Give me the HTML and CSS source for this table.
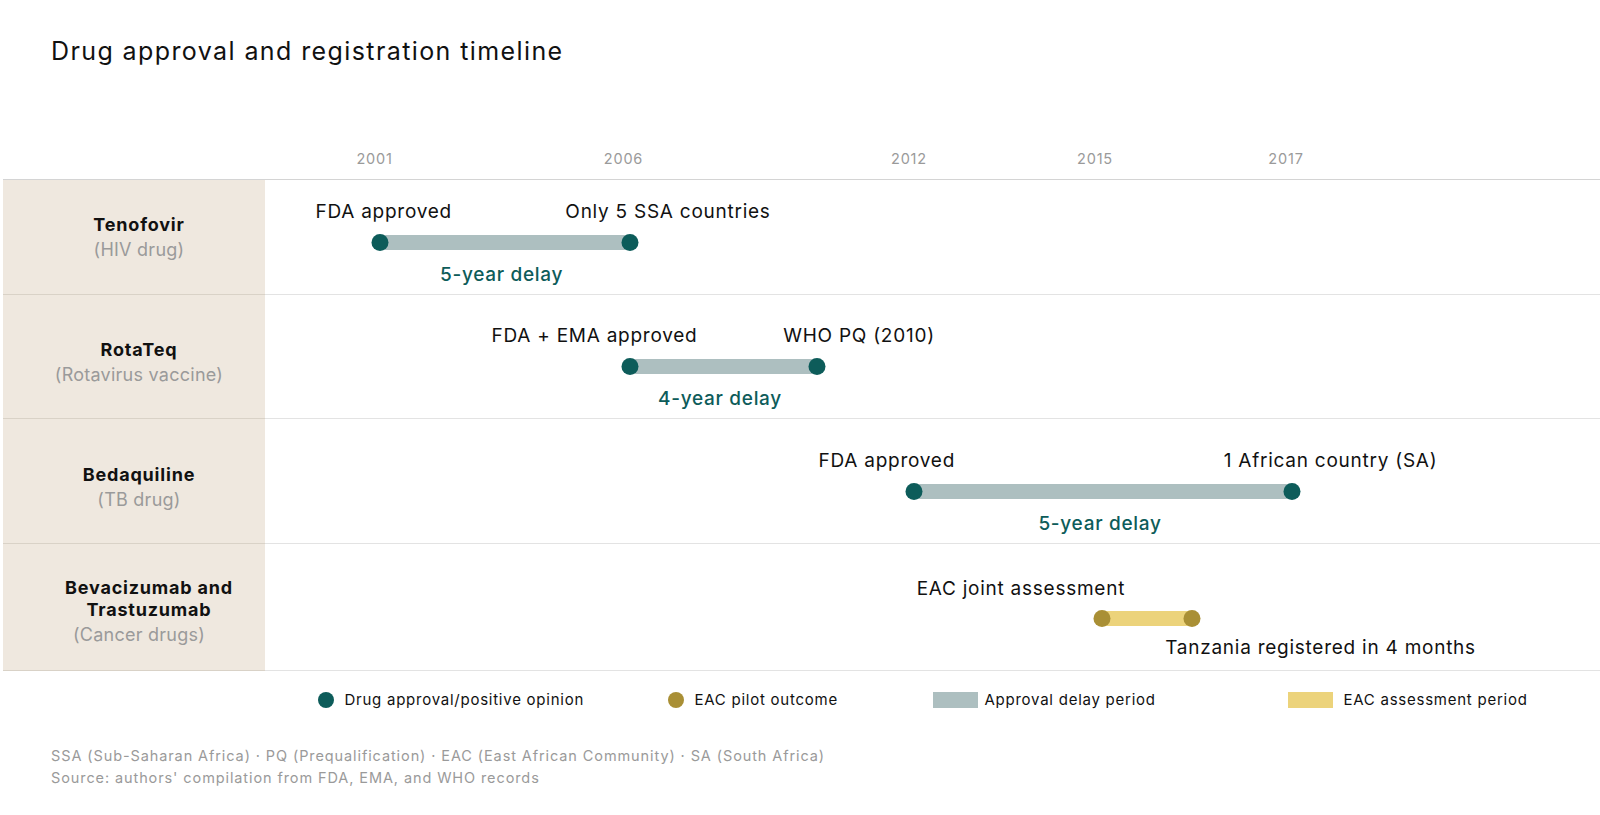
FILE: index.html
```html
<!DOCTYPE html>
<html lang="en">
<head>
<meta charset="utf-8">
<title>Drug approval and registration timeline</title>
<link rel="stylesheet" href="styles.css">
</head>
<body>
<div class="chart">
  <h1 class="title">Drug approval and registration timeline</h1>

  <div class="axis">
    <div class="axis-spacer"></div>
    <div class="axis-years">
      <span class="year" style="left:109.5px">2001</span>
      <span class="year" style="left:358.5px">2006</span>
      <span class="year" style="left:644px">2012</span>
      <span class="year" style="left:830px">2015</span>
      <span class="year" style="left:1021px">2017</span>
    </div>
  </div>

  <div class="table">
    <div class="row row--1">
      <div class="drug">
        <div class="drug-name">Tenofovir</div>
        <div class="drug-type">(HIV drug)</div>
      </div>
      <div class="track">
        <div class="labels labels--top">
          <span class="note" style="left:118.7px">FDA approved</span>
          <span class="note" style="left:403px">Only 5 SSA countries</span>
        </div>
        <div class="bar-line">
          <span class="bar bar--delay" style="left:114.6px;width:250px"></span>
          <span class="dot dot--approval" style="left:114.6px"></span>
          <span class="dot dot--approval" style="left:364.6px"></span>
        </div>
        <div class="labels labels--bottom">
          <span class="note note--delay" style="left:236.6px">5-year delay</span>
        </div>
      </div>
    </div>

    <div class="row row--2">
      <div class="drug drug--low">
        <div class="drug-name">RotaTeq</div>
        <div class="drug-type">(Rotavirus vaccine)</div>
      </div>
      <div class="track">
        <div class="labels labels--top">
          <span class="note" style="left:329.5px">FDA + EMA approved</span>
          <span class="note" style="left:594px">WHO PQ (2010)</span>
        </div>
        <div class="bar-line">
          <span class="bar bar--delay" style="left:364.6px;width:187.7px"></span>
          <span class="dot dot--approval" style="left:364.6px"></span>
          <span class="dot dot--approval" style="left:552.3px"></span>
        </div>
        <div class="labels labels--bottom">
          <span class="note note--delay" style="left:455px">4-year delay</span>
        </div>
      </div>
    </div>

    <div class="row row--3">
      <div class="drug drug--low">
        <div class="drug-name">Bedaquiline</div>
        <div class="drug-type">(TB drug)</div>
      </div>
      <div class="track">
        <div class="labels labels--top">
          <span class="note" style="left:621.8px">FDA approved</span>
          <span class="note" style="left:1065.6px">1 African country (SA)</span>
        </div>
        <div class="bar-line">
          <span class="bar bar--delay" style="left:649.3px;width:377.5px"></span>
          <span class="dot dot--approval" style="left:649.3px"></span>
          <span class="dot dot--approval" style="left:1026.8px"></span>
        </div>
        <div class="labels labels--bottom">
          <span class="note note--delay" style="left:835px">5-year delay</span>
        </div>
      </div>
    </div>

    <div class="row row--4 row--eac">
      <div class="drug drug--lowish">
        <div class="drug-name drug-name--wide">Bevacizumab and<br>Trastuzumab</div>
        <div class="drug-type">(Cancer drugs)</div>
      </div>
      <div class="track">
        <div class="labels labels--top">
          <span class="note" style="left:755.9px">EAC joint assessment</span>
        </div>
        <div class="bar-line">
          <span class="bar bar--eac" style="left:837px;width:89.8px"></span>
          <span class="dot dot--eac" style="left:837px"></span>
          <span class="dot dot--eac" style="left:926.8px"></span>
        </div>
        <div class="labels labels--bottom">
          <span class="note" style="left:1055.5px">Tanzania registered in 4 months</span>
        </div>
      </div>
    </div>
  </div>

  <div class="legend">
    <div class="legend-item">
      <span class="legend-dot legend-dot--approval"></span>
      <span class="legend-text">Drug approval/positive opinion</span>
    </div>
    <div class="legend-item">
      <span class="legend-dot legend-dot--eac"></span>
      <span class="legend-text">EAC pilot outcome</span>
    </div>
    <div class="legend-item legend-item--tight">
      <span class="legend-swatch legend-swatch--delay"></span>
      <span class="legend-text">Approval delay period</span>
    </div>
    <div class="legend-item">
      <span class="legend-swatch legend-swatch--eac"></span>
      <span class="legend-text">EAC assessment period</span>
    </div>
  </div>

  <div class="notes">
    <p class="note-line">SSA (Sub-Saharan Africa) · PQ (Prequalification) · EAC (East African Community) · SA (South Africa)</p>
    <p class="note-line">Source: authors' compilation from FDA, EMA, and WHO records</p>
  </div>
</div>
</body>
</html>
```

FILE: styles.css
```css
* {
  box-sizing: border-box;
}

body {
  margin: 0;
  background: #ffffff;
  color: #111111;
  font-family: Inter, "Noto Sans", "DejaVu Sans", sans-serif;
}

.chart {
  padding-left: 3px;
}

.title {
  margin: 0;
  padding: 36px 0 0 48px;
  font-size: 25px;
  line-height: 30px;
  font-weight: 400;
  letter-spacing: 1.4px;
  color: #111111;
}

/* year axis */
.axis {
  display: flex;
  align-items: flex-end;
  height: 113px;
  padding-bottom: 12px;
}

.axis-spacer {
  flex: none;
  width: 262px;
}

.axis-years {
  position: relative;
  flex: 1;
  height: 17px;
}

.year {
  position: absolute;
  top: 0;
  transform: translateX(-50%);
  font-size: 14.5px;
  line-height: 17px;
  letter-spacing: 0.8px;
  color: #9a9a9a;
}

/* table */
.table {
  border-top: 1px solid #d4d4d4;
}

.row {
  display: flex;
}

.row--1 { height: 115px; }
.row--2 { height: 124px; }
.row--3 { height: 125px; }
.row--4 { height: 127px; }

.drug {
  flex: none;
  width: 262px;
  display: flex;
  flex-direction: column;
  justify-content: center;
  align-items: center;
  text-align: center;
  padding-left: 10px;
  background: #efe8df;
  border-bottom: 1px solid #d9d2c7;
}

.drug--low {
  padding-top: 12px;
}

.drug--lowish {
  padding-top: 9px;
}

.drug-name {
  font-size: 18px;
  line-height: 22px;
  font-weight: 700;
  letter-spacing: 0.8px;
  color: #111111;
}

.drug-name--wide {
  padding-left: 20px;
}

.drug-type {
  margin-top: 3px;
  font-size: 18px;
  line-height: 22px;
  letter-spacing: 0.25px;
  color: #9a9a9a;
}

.track {
  flex: 1;
  display: flex;
  flex-direction: column;
  justify-content: flex-end;
  padding-bottom: 7px;
  border-bottom: 1px solid #e3e3e3;
}

.labels {
  position: relative;
  height: 24px;
}

.labels--top {
  margin-bottom: 9.5px;
}

.labels--bottom {
  margin-top: 12.5px;
}

.row--eac .track {
  padding-bottom: 10px;
}

.row--eac .labels--bottom {
  margin-top: 9px;
}

.note {
  position: absolute;
  top: 0;
  transform: translateX(-50%);
  white-space: nowrap;
  font-size: 19px;
  line-height: 24px;
  letter-spacing: 0.75px;
  color: #111111;
}

.note--delay {
  color: #0d5c5a;
  font-weight: 500;
  letter-spacing: 0.7px;
}

.bar-line {
  position: relative;
  height: 17px;
}

.bar {
  position: absolute;
  top: 1px;
  height: 15px;
}

.bar--delay {
  background: #adbfc0;
}

.bar--eac {
  background: #ecd37b;
}

.dot {
  position: absolute;
  top: 0;
  width: 17px;
  height: 17px;
  border-radius: 50%;
  transform: translateX(-50%);
}

.dot--approval {
  background: #0d5c5a;
}

.dot--eac {
  background: #a98f35;
}

/* legend */
.legend {
  display: grid;
  grid-template-columns: 350px 265px 355px auto;
  padding: 20px 0 0 314.5px;
}

.legend-item {
  display: flex;
  align-items: center;
  gap: 11px;
  height: 18px;
}

.legend-item--tight {
  gap: 7px;
}

.legend-text {
  font-size: 15px;
  line-height: 18px;
  letter-spacing: 0.75px;
  color: #111111;
  white-space: nowrap;
}

.legend-dot {
  flex: none;
  width: 16px;
  height: 16px;
  border-radius: 50%;
}

.legend-dot--approval {
  background: #0d5c5a;
}

.legend-dot--eac {
  background: #a98f35;
}

.legend-swatch {
  flex: none;
  width: 45px;
  height: 16px;
}

.legend-swatch--delay {
  background: #adbfc0;
}

.legend-swatch--eac {
  background: #ecd37b;
}

/* notes */
.notes {
  padding: 36px 0 0 48px;
}

.note-line {
  margin: 0;
  font-size: 14.5px;
  line-height: 21.5px;
  letter-spacing: 0.9px;
  color: #9a9a9a;
}
```
